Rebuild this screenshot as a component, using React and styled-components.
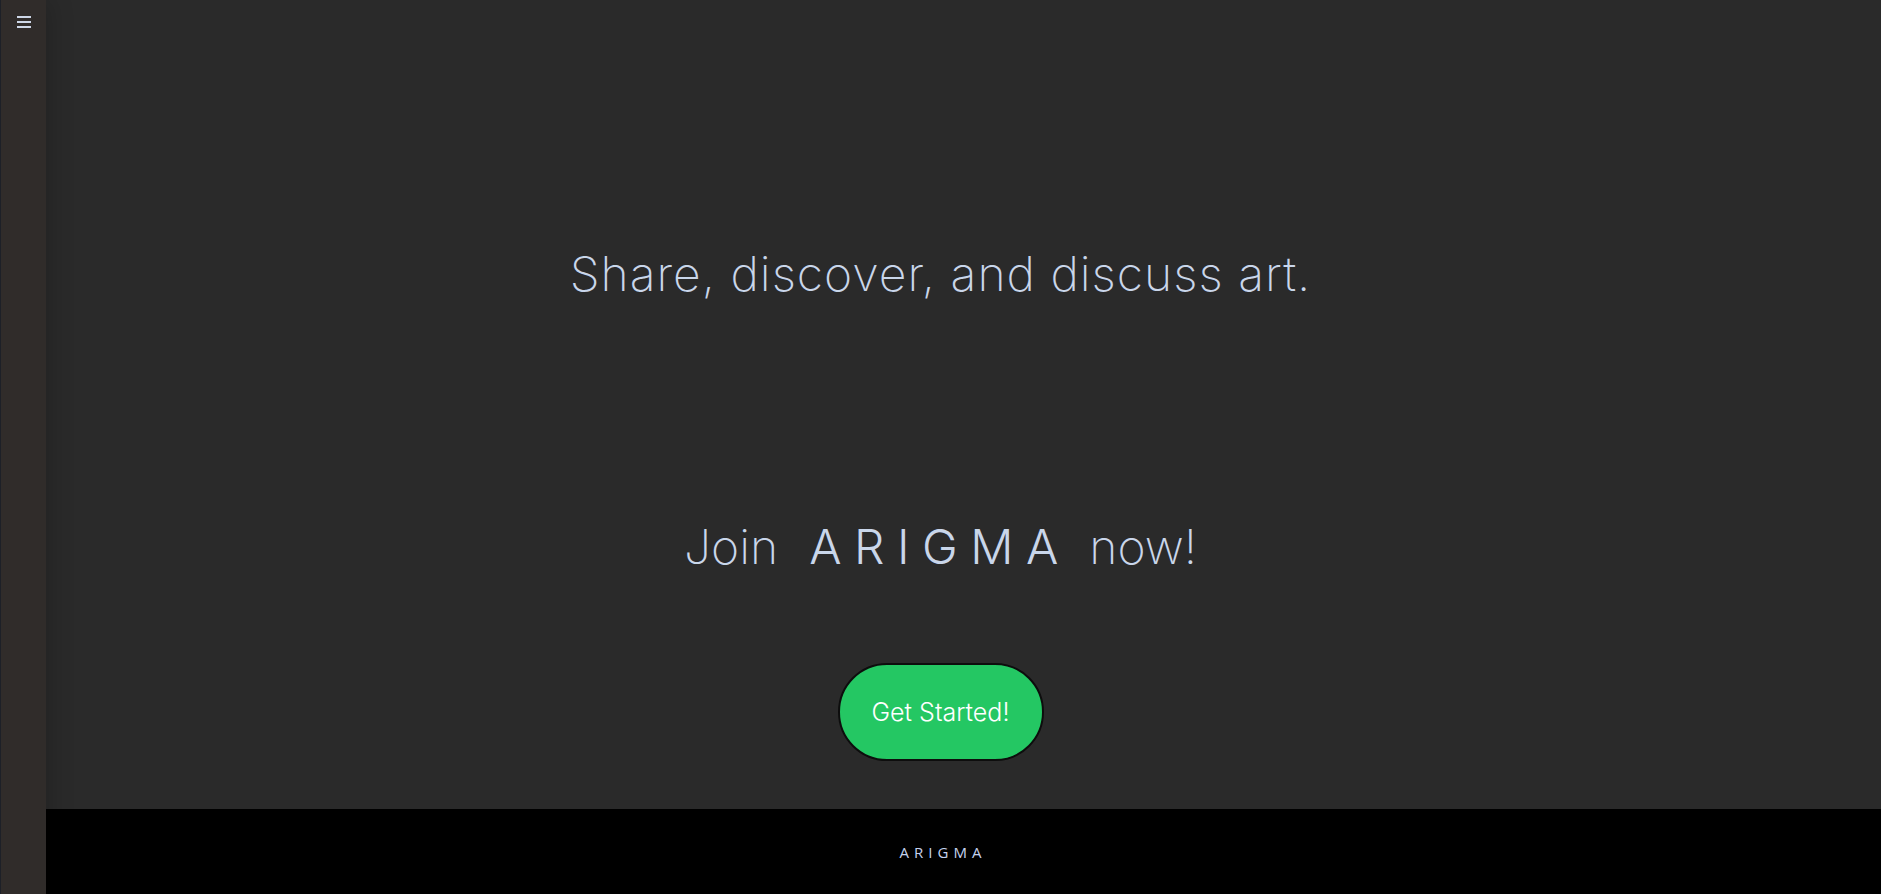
import React from "react";
import styled, { createGlobalStyle } from "styled-components";

const GlobalStyle = createGlobalStyle`
  html, body {
    margin: 0;
    padding: 0;
    background: #2a2a2a;
  }
  body {
    font-family: Inter, "Noto Sans", sans-serif;
  }
  * { box-sizing: border-box; }
`;

const Page = styled.div`
  min-height: 100vh;
  display: flex;
  flex-direction: column;
  background: #2a2a2a;
`;

const Sidebar = styled.aside`
  position: fixed;
  top: 0;
  left: 0;
  bottom: 0;
  width: 46px;
  background: #302c2a;
  border-left: 1px solid #1d2027;
  box-shadow: 4px 0 24px rgba(0, 0, 0, 0.18);
  z-index: 10;
`;

const MenuButton = styled.button`
  display: flex;
  flex-direction: column;
  gap: 3px;
  padding: 0;
  margin: 16px 0 0 16px;
  background: none;
  border: none;
  cursor: pointer;
`;

const Bar = styled.span`
  display: block;
  width: 14px;
  height: 2px;
  background: #cdd6e6;
`;

const Main = styled.main`
  flex: 1;
  display: flex;
  flex-direction: column;
  align-items: center;
  padding-top: 250px;
  color: #c9d6ea;
`;

const Tagline = styled.h1`
  margin: 0;
  font-size: 48px;
  line-height: 48px;
  font-weight: 200;
  letter-spacing: ${(p) => p.$spacing || "0"};
`;

const JoinLine = styled(Tagline)`
  margin-top: 225px;
`;

const Brand = styled.span`
  font-weight: 300;
  letter-spacing: 12.5px;
  margin: 0 5px;
`;

const StartButton = styled.button`
  margin-top: 92px;
  width: 206px;
  height: 98px;
  border-radius: 49px;
  border: 2px solid #0d0d0d;
  background: #24c763;
  color: #ffffff;
  font-family: Inter, "Noto Sans", sans-serif;
  font-size: 25px;
  font-weight: 300;
  cursor: pointer;
`;

const Footer = styled.footer`
  margin-top: 47px;
  height: 85px;
  background: #000;
  display: flex;
  align-items: center;
  justify-content: center;
`;

const FooterBrand = styled.span`
  font-family: "Open Sans", "Noto Sans", sans-serif;
  font-size: 15px;
  letter-spacing: 5px;
  padding-left: 5px;
  color: #c5d2ee;
`;

export default function App() {
  return (
    <>
      <GlobalStyle />
      <Sidebar>
        <MenuButton aria-label="menu">
          <Bar />
          <Bar />
          <Bar />
        </MenuButton>
      </Sidebar>
      <Page>
        <Main>
          <Tagline $spacing="1px">Share, discover, and discuss art.</Tagline>
          <JoinLine>
            Join<Brand> ARIGMA</Brand> now!
          </JoinLine>
          <StartButton>Get Started!</StartButton>
        </Main>
        <Footer>
          <FooterBrand>ARIGMA</FooterBrand>
        </Footer>
      </Page>
    </>
  );
}
